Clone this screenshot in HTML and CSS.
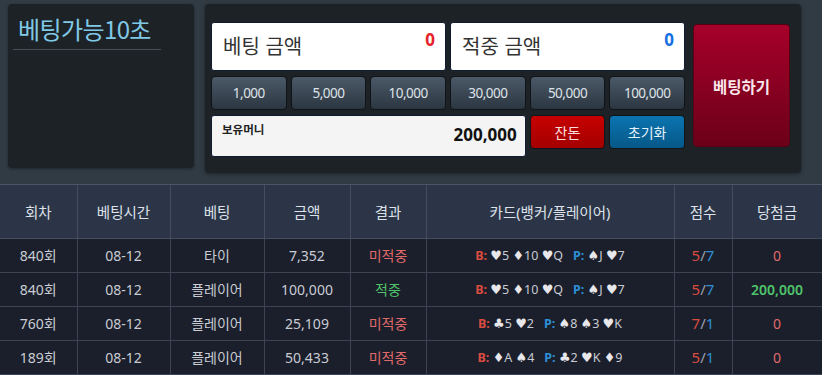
FILE: index.html
```html
<!DOCTYPE html>
<html lang="ko">
<head>
<meta charset="utf-8">
<link rel="stylesheet" href="styles.css">
</head>
<body>
<div class="wrap">
  <section class="top">
    <div class="timer-panel">
      <div class="timer-title">베팅가능10초</div>
    </div>
    <div class="bet-panel">
      <div class="bet-grid">
        <div class="amount-box span3"><span class="amount-label">베팅 금액</span><span class="amount-val red">0</span></div>
        <div class="amount-box span3"><span class="amount-label">적중 금액</span><span class="amount-val blue">0</span></div>
        <button class="chip">1,000</button>
        <button class="chip">5,000</button>
        <button class="chip">10,000</button>
        <button class="chip">30,000</button>
        <button class="chip">50,000</button>
        <button class="chip">100,000</button>
        <div class="money-box span4"><span class="money-label">보유머니</span><span class="money-val">200,000</span></div>
        <button class="act act-red">잔돈</button>
        <button class="act act-blue">초기화</button>
      </div>
      <button class="bet-btn">베팅하기</button>
    </div>
  </section>
  <table class="hist">
    <colgroup>
      <col class="c1"><col class="c2"><col class="c3"><col class="c4"><col class="c5"><col class="c6"><col class="c7"><col class="c8">
    </colgroup>
    <thead>
      <tr><th>회차</th><th>베팅시간</th><th>베팅</th><th>금액</th><th>결과</th><th>카드(뱅커/플레이어)</th><th>점수</th><th>당첨금</th></tr>
    </thead>
    <tbody>
      <tr><td>840회</td><td>08-12</td><td>타이</td><td>7,352</td><td class="lose">미적중</td>
        <td class="cards"><b class="bk">B:</b> <span class="s">♥</span>5 <span class="s">♦</span>10 <span class="s">♥</span>Q<span class="gap"></span><b class="pl">P:</b> <span class="s">♠</span>J <span class="s">♥</span>7</td>
        <td class="score"><span class="bk">5</span><span class="sl">/</span><span class="pl">7</span></td><td class="lose">0</td></tr>
      <tr><td>840회</td><td>08-12</td><td>플레이어</td><td>100,000</td><td class="win">적중</td>
        <td class="cards"><b class="bk">B:</b> <span class="s">♥</span>5 <span class="s">♦</span>10 <span class="s">♥</span>Q<span class="gap"></span><b class="pl">P:</b> <span class="s">♠</span>J <span class="s">♥</span>7</td>
        <td class="score"><span class="bk">5</span><span class="sl">/</span><span class="pl">7</span></td><td class="win">200,000</td></tr>
      <tr><td>760회</td><td>08-12</td><td>플레이어</td><td>25,109</td><td class="lose">미적중</td>
        <td class="cards"><b class="bk">B:</b> <span class="s">♣</span>5 <span class="s">♥</span>2<span class="gap"></span><b class="pl">P:</b> <span class="s">♠</span>8 <span class="s">♠</span>3 <span class="s">♥</span>K</td>
        <td class="score"><span class="bk">7</span><span class="sl">/</span><span class="pl">1</span></td><td class="lose">0</td></tr>
      <tr><td>189회</td><td>08-12</td><td>플레이어</td><td>50,433</td><td class="lose">미적중</td>
        <td class="cards"><b class="bk">B:</b> <span class="s">♦</span>A <span class="s">♠</span>4<span class="gap"></span><b class="pl">P:</b> <span class="s">♣</span>2 <span class="s">♥</span>K <span class="s">♦</span>9</td>
        <td class="score"><span class="bk">5</span><span class="sl">/</span><span class="pl">1</span></td><td class="lose">0</td></tr>
    </tbody>
  </table>
</div>
</body>
</html>
```
FILE: styles.css
```css
* { box-sizing: border-box; }
html, body { margin: 0; padding: 0; background: #ffffff; }
body { font-family: "Noto Sans", "Noto Sans CJK KR", sans-serif; }
.wrap { width: 822px; background: #303b44; height: 375px; overflow: hidden; }

.top { display: flex; align-items: flex-start; padding: 4px 0 0 8px; height: 185px; border-bottom: 1px solid #4b5664; gap: 11px; }

.timer-panel { width: 186px; height: 164px; background: #1d2226; border-radius: 4px; box-shadow: 0 1px 3px rgba(0,0,0,0.35); padding: 9px 5px 0 5px; }
.timer-title { font-family: "Noto Sans CJK KR", sans-serif; color: #80c9e6; font-size: 24px; line-height: 32px; padding: 0 0 4px 5px; width: 148px; border-bottom: 1px solid #454d55; letter-spacing: -0.6px; white-space: nowrap; }

.bet-panel { width: 596px; height: 169px; background: #1d2226; border-radius: 4px; box-shadow: 0 1px 4px rgba(0,0,0,0.4); display: flex; align-items: flex-start; padding: 16px 11px 0 6px; gap: 8px; }

.bet-grid { width: 474px; display: grid; grid-template-columns: repeat(6, 1fr); grid-template-rows: 51px 34px 41px; gap: 5px 4px; align-items: start; }
.span3 { grid-column: span 3; }
.span4 { grid-column: span 4; }

.amount-box { margin-top: 2px; height: 49px; background: #ffffff; border-radius: 3px; border: 1px solid #0f1a33; display: flex; justify-content: space-between; align-items: flex-start; padding: 0 10px 0 11px; }
.amount-label { font-family: "Noto Sans CJK KR", sans-serif; font-size: 20px; color: #333; line-height: 45px; }
.amount-val { font-weight: 700; font-size: 17px; line-height: 32px; padding-top: 1px; }
.red { color: #e5212b; }
.blue { color: #1670e0; }

.chip { height: 34px; border: 1px solid #101418; border-radius: 4px; background: linear-gradient(#4b5967, #2b3641); color: #dfe3e8; font-family: "Noto Sans", sans-serif; font-size: 13.5px; letter-spacing: -0.5px; padding: 0; }

.money-box { height: 42px; background: #f4f4f4; border: 1px solid #0f1a33; border-radius: 3px; display: flex; justify-content: space-between; align-items: flex-start; padding: 5px 8px 0 10px; }
.money-label { font-family: "Noto Sans CJK KR", sans-serif; font-weight: 700; font-size: 11.5px; color: #222; line-height: 16px; }
.money-val { font-weight: 700; font-size: 17px; color: #111; line-height: 24px; padding-top: 2px; }

.act { height: 34px; border-radius: 4px; border: 1px solid #101418; font-family: "Noto Sans CJK KR", sans-serif; font-size: 14px; padding: 0; }
.act-red { background: linear-gradient(#c70000, #a30000); color: #ffe0e0; }
.act-blue { background: linear-gradient(#0b74b0, #065888); color: #e6f2fb; }

.bet-btn { margin-top: 4px; width: 97px; height: 123px; border-radius: 4px; border: 1px solid #5b0014; background: linear-gradient(#a6002a, #6c0019); color: #fbe6ea; font-family: "Noto Sans CJK KR", sans-serif; font-weight: 700; font-size: 15.5px; padding: 0; }

.hist { width: 822px; border-collapse: collapse; table-layout: fixed; font-family: "Noto Sans", "Noto Sans CJK KR", sans-serif; }
.c1 { width: 77px; } .c2 { width: 93px; } .c3 { width: 94px; } .c4 { width: 86px; }
.c5 { width: 76px; } .c6 { width: 248px; } .c7 { width: 58px; } .c8 { width: 90px; }
.hist th { height: 53px; background: #2c3547; color: #dde2ea; font-weight: 400; font-size: 14.5px; border: 1px solid #444d5d; border-top: 0; text-align: center; padding: 0; }
.hist td { height: 34px; background: #1b1f2b; color: #c9ccd3; font-size: 14px; border: 1px solid #3d4453; text-align: center; padding: 0; }
.hist th:first-child, .hist td:first-child { border-left: 0; }
.lose { color: #e06a6a !important; }
.win { color: #4fc46a !important; }
.hist td.win:last-child { font-weight: 600; }
.cards { font-size: 12.5px !important; }
.cards .s { font-family: "DejaVu Sans", sans-serif; color: #e8e8ec; font-size: 13px; }
.gap { display: inline-block; width: 10px; }
.bk { color: #d94b3f; }
.pl { color: #2d8fd6; }
.sl { color: #9aa0aa; }
.score { font-size: 15px !important; }
.cards .bk, .cards .pl { font-size: 12.5px; }
```
